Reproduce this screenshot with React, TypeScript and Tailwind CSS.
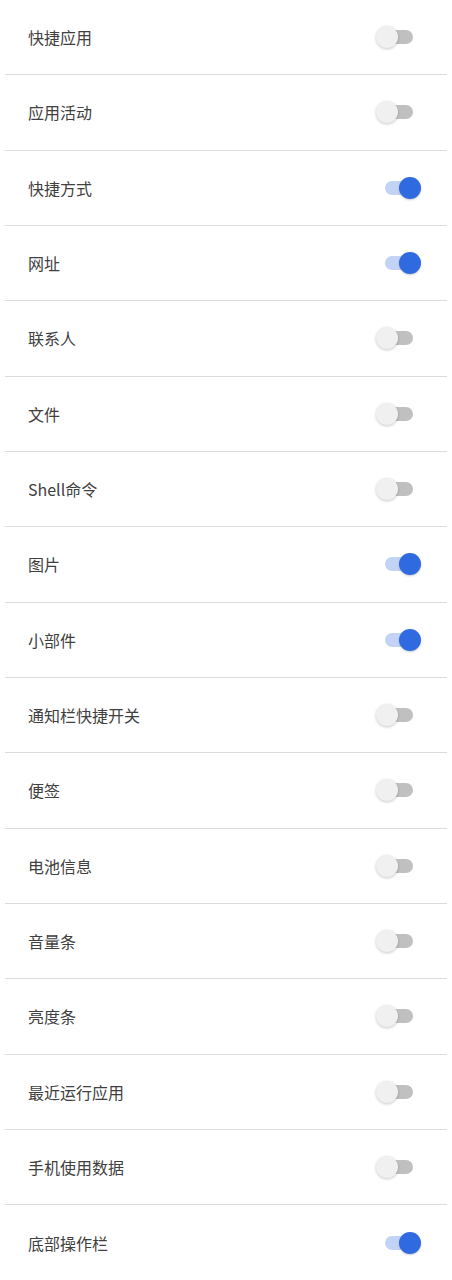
const items: [string, boolean][] = [
  ["快捷应用", false],
  ["应用活动", false],
  ["快捷方式", true],
  ["网址", true],
  ["联系人", false],
  ["文件", false],
  ["Shell命令", false],
  ["图片", true],
  ["小部件", true],
  ["通知栏快捷开关", false],
  ["便签", false],
  ["电池信息", false],
  ["音量条", false],
  ["亮度条", false],
  ["最近运行应用", false],
  ["手机使用数据", false],
  ["底部操作栏", true],
];

function Toggle({ on }: { on: boolean }) {
  return (
    <div className="relative w-[46px] h-[22px]">
      <div
        className={`absolute left-[9px] top-[4px] w-[28px] h-[14px] rounded-full ${
          on ? "bg-[#c3d3f6]" : "bg-[#c0c0c0]"
        }`}
      />
      <div
        className={`absolute top-0 w-[22px] h-[22px] rounded-full ${
          on
            ? "left-[23px] bg-[#2f6ae0] shadow-[0_1px_2px_rgba(0,0,0,0.2)]"
            : "left-0 bg-[#f0f0f0] shadow-[0_1px_3px_rgba(0,0,0,0.22)]"
        }`}
      />
    </div>
  );
}

export default function App() {
  return (
    <div
      className="w-[452px] h-[1280px] bg-white overflow-hidden"
      style={{ fontFamily: '"Noto Sans CJK SC", "Noto Sans", sans-serif' }}
    >
      <div className="px-[5px]">
        {items.map(([label, on], i) => (
          <div
            key={i}
            className={`h-[75.33px] flex items-center justify-between pl-[23px] pr-[25px] ${
              i < items.length - 1 ? "border-b border-[#dcdcdc]" : ""
            }`}
          >
            <span className="text-[16px] text-[#404040] leading-none">{label}</span>
            <Toggle on={on} />
          </div>
        ))}
      </div>
    </div>
  );
}
